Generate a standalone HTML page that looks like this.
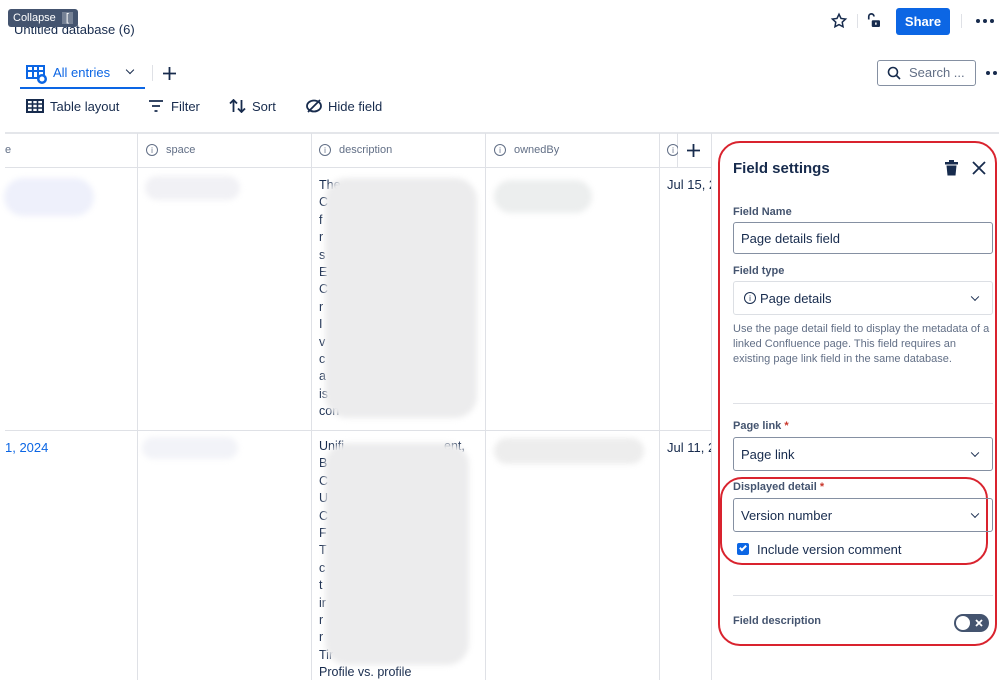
<!DOCTYPE html>
<html><head><style>
*{box-sizing:border-box;margin:0;padding:0}
body{width:999px;height:680px;overflow:hidden;background:#fff;font-family:"Liberation Sans",sans-serif;color:#172b4d;position:relative}
.a{position:absolute}
.hdr{font-size:11px;color:#626f86;top:143px;display:flex;align-items:center;height:14px}
.ic{display:inline-flex;align-items:center;justify-content:center;width:12px;height:12px;border:1px solid #626f86;border-radius:50%;font-size:8px;margin-right:8px}
.vl{position:absolute;width:1px;background:#dfe1e6}
.hl{position:absolute;height:1px;background:#dfe1e6}
.blur{position:absolute;border-radius:22px;filter:blur(3px)}
.lbl{font-size:11px;font-weight:bold;color:#44546f}
.inp{position:absolute;border:1px solid #8590a2;border-radius:3px;font-size:13px;padding-left:7px;display:flex;align-items:center}
.chev{position:absolute;right:14px;top:50%;width:6px;height:6px;border-right:1.6px solid #172b4d;border-bottom:1.6px solid #172b4d;transform:translateY(-70%) rotate(45deg)}
.tl{font-size:12.5px;line-height:17.4px;color:#172b4d}
.dots{position:absolute;display:flex;gap:3px}
.dots i{width:4px;height:4px;border-radius:50%;background:#172b4d}
</style></head><body>
<div class="a" style="left:14px;top:22px;font-size:13px;color:#172b4d">Untitled database (6)</div>
<div class="a" style="left:8px;top:9px;background:#44546f;color:#fff;font-size:11px;padding:3px 5px;border-radius:3px">Collapse <span style="background:#758195;padding:0 4px;margin-left:3px">[</span></div>
<svg class="a" style="left:830px;top:12px" width="18" height="18" viewBox="0 0 24 24"><path d="M12 3l2.7 5.6 6.1.8-4.5 4.2 1.1 6.1L12 16.8 6.6 19.7l1.1-6.1L3.2 9.4l6.1-.8z" fill="none" stroke="#172b4d" stroke-width="2"/></svg>
<div class="vl" style="left:857px;top:14px;height:14px"></div>
<svg class="a" style="left:865px;top:12px" width="18" height="18" viewBox="0 0 24 24"><path d="M5 10V6a3.5 3.5 0 0 1 7 0" fill="none" stroke="#172b4d" stroke-width="2.2"/><rect x="9" y="11" width="11" height="9" rx="1.5" fill="#172b4d"/><rect x="13.5" y="14" width="2" height="3" fill="#fff"/></svg>
<div class="a" style="left:896px;top:8px;width:54px;height:27px;background:#0c66e4;color:#fff;border-radius:3px;font-size:13px;font-weight:bold;text-align:center;line-height:27px">Share</div>
<div class="vl" style="left:961px;top:14px;height:14px"></div>
<div class="dots" style="left:976px;top:19px"><i></i><i></i><i></i></div>
<svg class="a" style="left:26px;top:65px" width="22" height="20" viewBox="0 0 22 20"><rect x="1" y="1" width="17" height="12" fill="none" stroke="#0c66e4" stroke-width="2"/><path d="M1 6h17M7 1v12M12 1v12" stroke="#0c66e4" stroke-width="2"/><circle cx="16" cy="14" r="5" fill="#0c66e4"/><circle cx="16" cy="14" r="2.5" fill="#fff"/></svg>
<div class="a" style="left:53px;top:65px;font-size:13px;color:#0c66e4">All entries</div>
<div class="a" style="left:127px;top:67px;width:6px;height:6px;border-right:1.6px solid #172b4d;border-bottom:1.6px solid #172b4d;transform:rotate(45deg)"></div>
<div class="a" style="left:20px;top:87px;width:125px;height:2px;background:#0c66e4"></div>
<div class="vl" style="left:152px;top:65px;height:16px"></div>
<svg class="a" style="left:163px;top:67px" width="13" height="13" viewBox="0 0 13 13"><path d="M6.5 0v13M0 6.5h13" stroke="#172b4d" stroke-width="1.8"/></svg>
<div class="a" style="left:877px;top:60px;width:99px;height:26px;border:1px solid #8590a2;border-radius:3px;font-size:13px;color:#626f86;line-height:24px;padding-left:31px">Search ...</div>
<svg class="a" style="left:887px;top:66px" width="14" height="14" viewBox="0 0 14 14"><circle cx="6" cy="6" r="4.5" fill="none" stroke="#172b4d" stroke-width="1.6"/><path d="M9.5 9.5L13 13" stroke="#172b4d" stroke-width="1.6"/></svg>
<div class="dots" style="left:986px;top:71px"><i></i><i></i><i></i></div>
<svg class="a" style="left:26px;top:99px" width="18" height="14" viewBox="0 0 18 14"><rect x="1" y="1" width="16" height="12" fill="none" stroke="#172b4d" stroke-width="2"/><path d="M1 5h16M1 9h16M6.5 1v12M11.5 1v12" stroke="#172b4d" stroke-width="1.6"/></svg>
<div class="a" style="left:50px;top:99px;font-size:13px">Table layout</div>
<svg class="a" style="left:148px;top:99px" width="16" height="14" viewBox="0 0 16 14"><path d="M1 2h14M4 7h8M6.5 12h3" stroke="#172b4d" stroke-width="1.8"/></svg>
<div class="a" style="left:171px;top:99px;font-size:13px">Filter</div>
<svg class="a" style="left:229px;top:99px" width="17" height="14" viewBox="0 0 17 14"><path d="M4.5 13V1M1 4.5L4.5 1 8 4.5M12.5 1v12M9 9.5l3.5 3.5 3.5-3.5" fill="none" stroke="#172b4d" stroke-width="1.8"/></svg>
<div class="a" style="left:252px;top:99px;font-size:13px">Sort</div>
<svg class="a" style="left:306px;top:99px" width="16" height="14" viewBox="0 0 16 14"><ellipse cx="8" cy="7" rx="7" ry="5.5" fill="none" stroke="#172b4d" stroke-width="1.8"/><path d="M2 13L14 1" stroke="#172b4d" stroke-width="1.8"/></svg>
<div class="a" style="left:328px;top:99px;font-size:13px">Hide field</div>
<div class="hl" style="left:5px;top:132px;width:994px;height:2px;background:#e4e6ea"></div>
<div class="hl" style="left:5px;top:167px;width:706px"></div>
<div class="hl" style="left:5px;top:430px;width:706px"></div>
<div class="vl" style="left:137px;top:133px;height:547px"></div>
<div class="vl" style="left:311px;top:133px;height:547px"></div>
<div class="vl" style="left:485px;top:133px;height:547px"></div>
<div class="vl" style="left:659px;top:133px;height:547px"></div>
<div class="vl" style="left:711px;top:133px;height:547px"></div>
<div class="vl" style="left:677px;top:133px;height:34px"></div>
<div class="a hdr" style="left:5px">e</div>
<div class="a hdr" style="left:146px"><span class="ic">i</span>space</div>
<div class="a hdr" style="left:319px"><span class="ic">i</span>description</div>
<div class="a hdr" style="left:494px"><span class="ic">i</span>ownedBy</div>
<div class="a hdr" style="left:667px"><span class="ic">i</span></div>
<div class="a" style="left:678px;top:134px;width:32px;height:32px;background:#fff"></div>
<svg class="a" style="left:687px;top:144px" width="13" height="13" viewBox="0 0 13 13"><path d="M6.5 0v13M0 6.5h13" stroke="#172b4d" stroke-width="1.8"/></svg>
<div class="blur" style="left:4px;top:178px;width:90px;height:38px;background:#eef0fb"></div>
<div class="blur" style="left:145px;top:176px;width:95px;height:24px;background:#f1f1f5"></div>
<div class="blur" style="left:494px;top:180px;width:98px;height:33px;background:#eceeee"></div>
<div class="a" style="left:319px;top:177px">
<div class="tl">The<br>C<br>f<br>r<br>s<br>E<br>C<br>r<br>I<br>v<br>c<br>a<br>is<br>con</div></div>
<div class="blur" style="left:325px;top:178px;width:152px;height:240px;background:#ececed"></div>
<div class="a" style="left:667px;top:177px;font-size:13px;width:44px;overflow:hidden;white-space:nowrap">Jul 15, 2</div>
<div class="a" style="left:5px;top:440px;font-size:13px;color:#0c66e4">1, 2024</div>
<div class="blur" style="left:142px;top:437px;width:96px;height:22px;background:#f2f3f8"></div>
<div class="blur" style="left:494px;top:438px;width:150px;height:26px;background:#ededed"></div>
<div class="a" style="left:319px;top:438px">
<div class="tl">Unifi<br>B<br>C<br>U<br>C<br>F<br>T<br>c<br>t<br>ir<br>r<br>r<br>Tir<br>Profile vs. profile</div></div>
<div class="a tl" style="left:444px;top:438px">ent,</div>
<div class="blur" style="left:325px;top:443px;width:144px;height:222px;background:#ececed"></div>
<div class="a" style="left:667px;top:440px;font-size:13px;width:44px;overflow:hidden;white-space:nowrap">Jul 11, 2</div>
<div class="a" style="left:718px;top:141px;width:279px;height:505px;border:2px solid #d9232e;border-radius:22px"></div>
<div class="a" style="left:733px;top:160px;font-size:15px;font-weight:bold">Field settings</div>
<svg class="a" style="left:944px;top:160px" width="15" height="16" viewBox="0 0 15 16"><rect x="1" y="2" width="13" height="2.5" fill="#172b4d"/><rect x="5" y="0" width="5" height="2" fill="#172b4d"/><path d="M2.5 5.5h10l-1 10h-8z" fill="#172b4d"/></svg>
<svg class="a" style="left:972px;top:161px" width="14" height="14" viewBox="0 0 14 14"><path d="M1 1l12 12M13 1L1 13" stroke="#172b4d" stroke-width="1.8"/></svg>
<div class="a lbl" style="left:733px;top:206px">Field Name</div>
<div class="inp" style="left:733px;top:222px;width:260px;height:32px">Page details field</div>
<div class="a lbl" style="left:733px;top:265px">Field type</div>
<div class="inp" style="left:733px;top:281px;width:260px;height:34px;border-color:#dcdfe4;padding-left:10px"><span class="ic" style="border-color:#172b4d;color:#172b4d;margin-right:4px">i</span>Page details<div class="chev"></div></div>
<div class="a" style="left:733px;top:322px;width:262px;font-size:11px;line-height:15px;color:#626f86">Use the page detail field to display the metadata of a linked Confluence page. This field requires an existing page link field in the same database.</div>
<div class="hl" style="left:733px;top:403px;width:260px"></div>
<div class="a lbl" style="left:733px;top:420px">Page link <span style="color:#c9372c">*</span></div>
<div class="inp" style="left:733px;top:437px;width:260px;height:34px">Page link<div class="chev"></div></div>
<div class="a" style="left:720px;top:477px;width:268px;height:88px;border:2px solid #d9232e;border-radius:22px"></div>
<div class="a lbl" style="left:733px;top:481px">Displayed detail <span style="color:#c9372c">*</span></div>
<div class="inp" style="left:733px;top:498px;width:260px;height:34px">Version number<div class="chev"></div></div>
<div class="a" style="left:737px;top:543px;width:12px;height:12px;background:#0c66e4;border-radius:2px"></div>
<div class="a" style="left:741px;top:544px;width:4px;height:7px;border-right:2px solid #fff;border-bottom:2px solid #fff;transform:rotate(45deg)"></div>
<div class="a" style="left:757px;top:542px;font-size:13px">Include version comment</div>
<div class="hl" style="left:733px;top:595px;width:260px"></div>
<div class="a lbl" style="left:733px;top:615px">Field description</div>
<div class="a" style="left:954px;top:614px;width:35px;height:18px;background:#44546f;border-radius:9px"></div>
<div class="a" style="left:956px;top:616px;width:14px;height:14px;background:#fff;border-radius:50%"></div>
<svg class="a" style="left:975px;top:619px" width="8" height="8" viewBox="0 0 8 8"><path d="M1 1l6 6M7 1L1 7" stroke="#fff" stroke-width="1.8"/></svg>
</body></html>
